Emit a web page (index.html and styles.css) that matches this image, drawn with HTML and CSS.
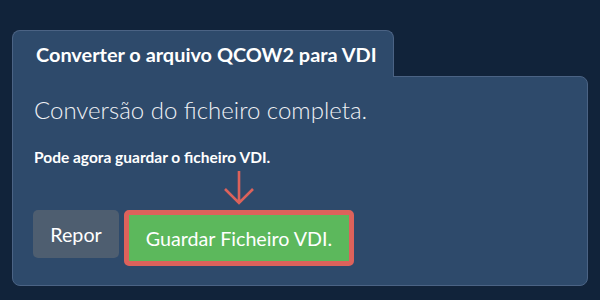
FILE: index.html
```html
<!DOCTYPE html>
<html lang="pt">
<head>
    <meta charset="UTF-8">
    <meta name="viewport" content="width=device-width, initial-scale=1.0">
    <title>Converter QCOW2 para VDI</title>
    <link rel="stylesheet" href="styles.css">
</head>
<body>
    <div class="converter">
        <div class="tab">Converter o arquivo QCOW2 para VDI</div>

        <div class="panel">
            <h1 class="result-title">Conversão do ficheiro completa.</h1>
            <p class="result-text">Pode agora guardar o ficheiro VDI.</p>

            <div class="actions">
                <button class="btn btn-reset">Repor</button>
                <span class="save-wrap">
                    <svg class="hint-arrow" width="32" height="36" viewBox="0 0 32 36">
                        <path d="M16 1 L16 33 M2 19 L16 33 L30 19" fill="none" stroke="#dc625b" stroke-width="2.6"/>
                    </svg>
                    <button class="btn btn-save">Guardar Ficheiro VDI.</button>
                </span>
            </div>
        </div>
    </div>
</body>
</html>
```

FILE: styles.css
```css
* {
    margin: 0;
    padding: 0;
    box-sizing: border-box;
    font-family: Lato, 'Noto Sans', sans-serif;
}

body {
    background: #11233a;
    width: 600px;
    height: 300px;
    overflow: hidden;
}

.converter {
    padding: 30px 12px 0;
}

.tab {
    position: relative;
    z-index: 1;
    width: 382px;
    height: 47px;
    margin-bottom: -1px;
    padding: 2px 0 0 23px;
    line-height: 43px;
    font-size: 19.9px;
    font-weight: 700;
    white-space: nowrap;
    color: #fff;
    background: #2e4a6b;
    border: 1px solid #4b6384;
    border-bottom: none;
    border-radius: 8px 8px 0 0;
}

.panel {
    width: 576px;
    height: 210px;
    padding: 19px 21px 0;
    background: #2e4a6b;
    border: 1px solid #4b6384;
    border-radius: 0 8px 8px 8px;
}

.result-title {
    font-size: 24px;
    font-weight: 300;
    line-height: 28px;
    color: #eef1f5;
}

.result-text {
    margin-top: 24px;
    font-size: 15.5px;
    font-weight: 700;
    line-height: 18px;
    color: #fff;
}

.actions {
    display: flex;
    align-items: flex-start;
    gap: 5px;
    margin-top: 44px;
    margin-left: -1px;
}

.btn {
    border: none;
    color: #fff;
    font-size: 19.7px;
    cursor: pointer;
}

.btn-reset {
    width: 86px;
    height: 48px;
    background: #4e5e70;
    border-radius: 5px;
}

.save-wrap {
    position: relative;
    display: block;
}

.hint-arrow {
    position: absolute;
    left: 50%;
    bottom: calc(100% + 4px);
    margin-left: -16px;
}

.btn-save {
    display: block;
    width: 230px;
    height: 56px;
    background: #5cb85c;
    border: 5px solid #dc625b;
    border-radius: 5px;
}
```
